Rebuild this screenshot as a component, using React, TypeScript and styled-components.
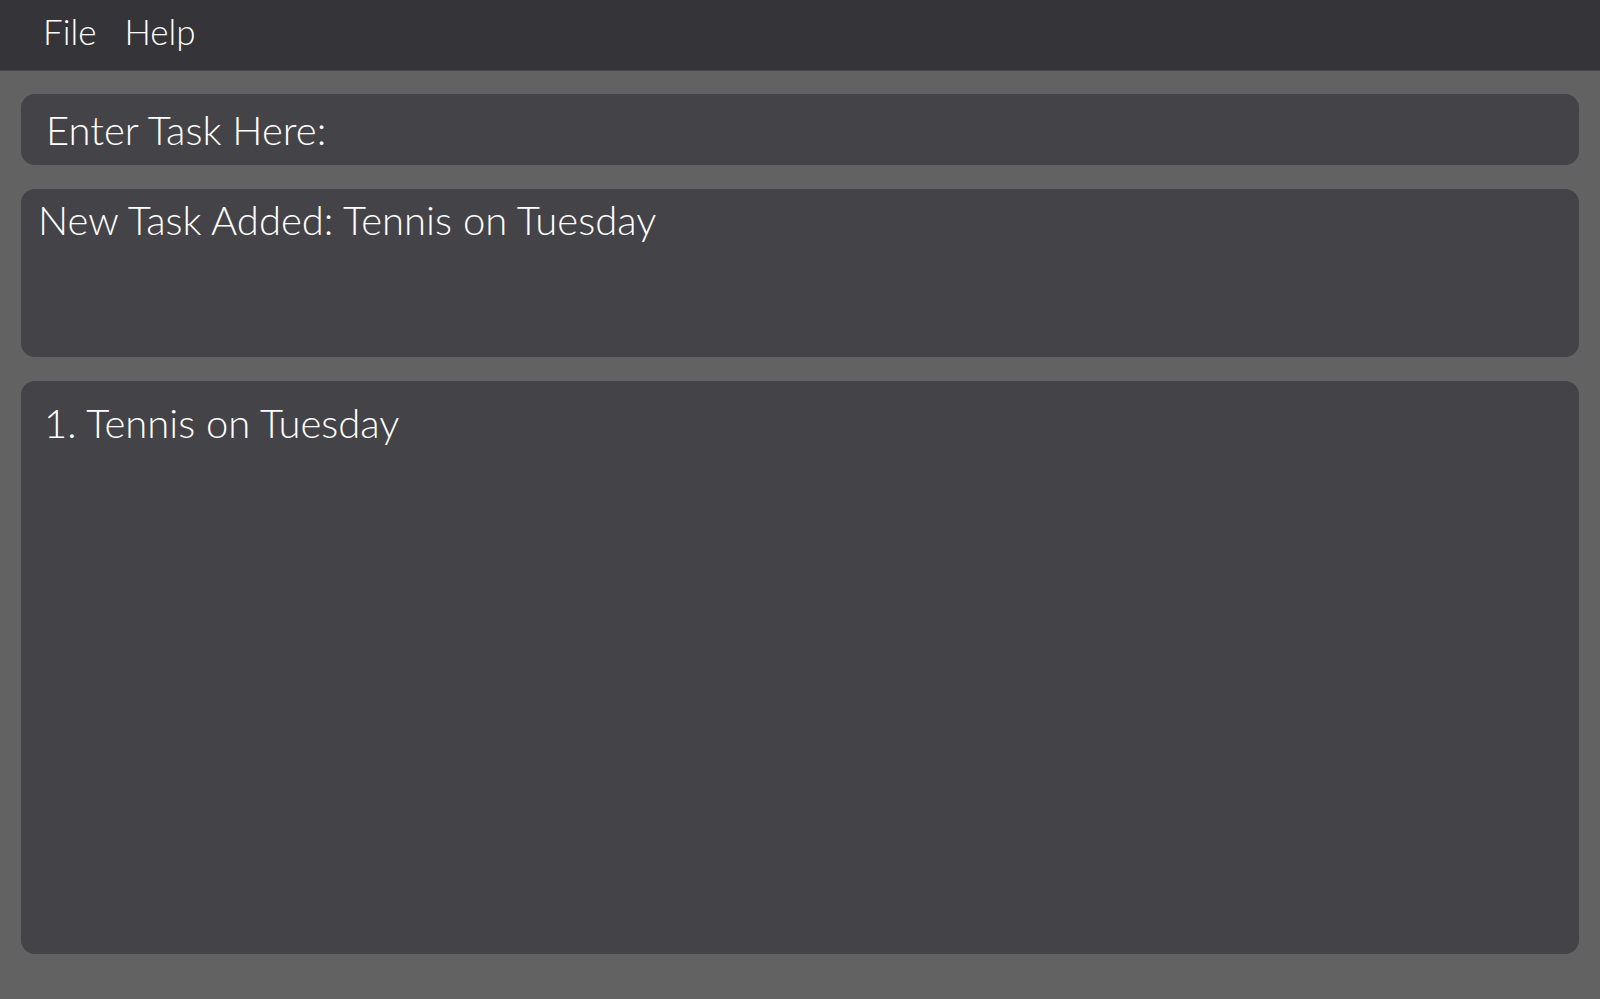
import React, { useState } from 'react'
import styled, { createGlobalStyle } from 'styled-components'

const COLORS = {
  BAR: '#353439',
  PAGE: '#636263',
  PANEL: '#444348',
  TEXT: '#ffffff',
}

const GlobalStyle = createGlobalStyle`
  html, body {
    margin: 0;
    padding: 0;
    background-color: ${COLORS.PAGE};
    font-family: Lato, 'Open Sans', sans-serif;
    font-weight: 300;
    color: ${COLORS.TEXT};
  }
  * {
    box-sizing: border-box;
  }
`

const App = () => {
  const [task, setTask] = useState('')
  const tasks = ['Tennis on Tuesday']

  return (
    <>
      <GlobalStyle />
      <Window>
        <MenuBar>
          <MenuItem>File</MenuItem>
          <MenuItem>Help</MenuItem>
        </MenuBar>
        <Content>
          <CommandBox
            value={task}
            onChange={(e) => setTask(e.target.value)}
            placeholder="Enter Task Here:"
          />
          <ResultPanel>New Task Added: Tennis on Tuesday</ResultPanel>
          <ListPanel>
            {tasks.map((t, i) => (
              <TaskRow key={t}>
                {i + 1}. {t}
              </TaskRow>
            ))}
          </ListPanel>
        </Content>
      </Window>
    </>
  )
}

export default App

const Window = styled.div`
  display: flex;
  flex-direction: column;
  height: 100vh;
`

const MenuBar = styled.div`
  display: flex;
  align-items: center;
  gap: 28px;
  flex: 0 0 71px;
  padding: 0 0 8px 43px;
  background-color: ${COLORS.BAR};
  border-bottom: 1px solid #4a494d;
`

const MenuItem = styled.span`
  font-size: 35px;
  line-height: 40px;
  cursor: default;
`

const Content = styled.div`
  flex: 1;
  display: flex;
  flex-direction: column;
  gap: 24px;
  padding: 23px 21px 45px;
  min-height: 0;
`

const CommandBox = styled.input`
  flex: 0 0 71px;
  width: 100%;
  padding: 0 25px;
  border: none;
  outline: none;
  border-radius: 14px;
  background-color: ${COLORS.PANEL};
  color: ${COLORS.TEXT};
  font-family: inherit;
  font-weight: 300;
  font-size: 40px;

  &::placeholder {
    color: ${COLORS.TEXT};
    opacity: 1;
  }
`

const ResultPanel = styled.div`
  flex: 0 0 168px;
  padding: 7px 17px;
  border-radius: 14px;
  background-color: ${COLORS.PANEL};
  font-size: 40px;
  line-height: 48px;
`

const ListPanel = styled.div`
  flex: 1;
  padding: 18px 23px;
  border-radius: 14px;
  background-color: ${COLORS.PANEL};
`

const TaskRow = styled.div`
  font-size: 40px;
  line-height: 48px;
`
